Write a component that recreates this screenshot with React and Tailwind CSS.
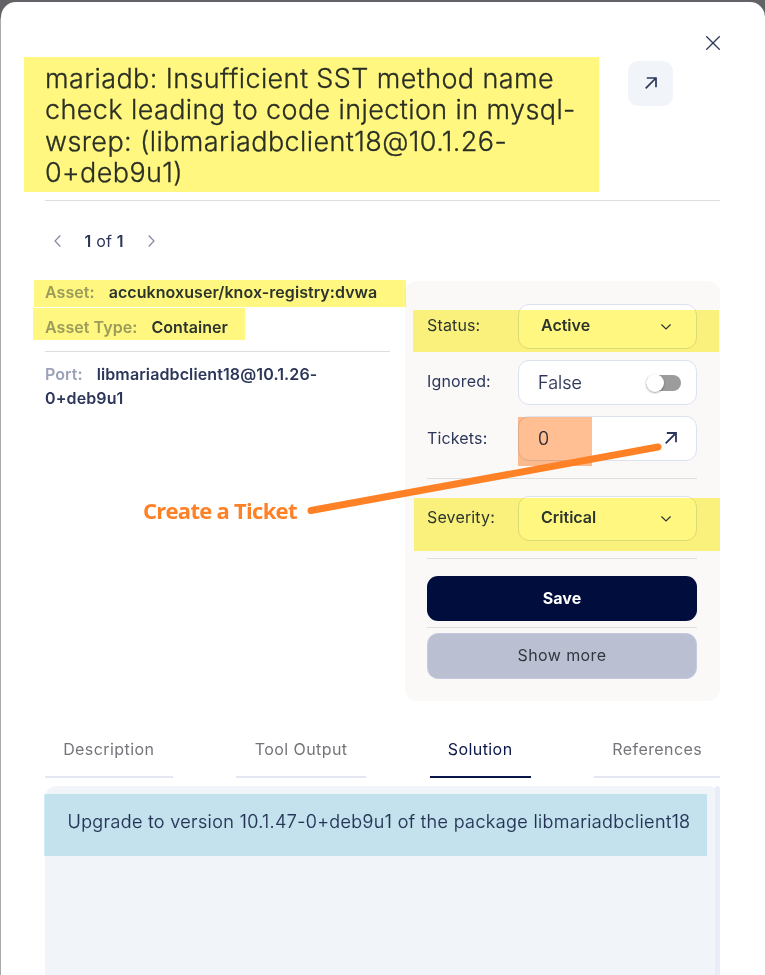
const ink = "text-[#2c3659]";

function ArrowUpRight({ className, w = 2 }) {
  return (
    <svg className={className} viewBox="0 0 12 12" fill="none" stroke="currentColor" strokeWidth={w}>
      <path d="M0.7 11.3 L11 1 M1.8 1 H11 V10.2" />
    </svg>
  );
}

function Chevron({ className, d, box }) {
  return (
    <svg className={className} viewBox={box} fill="none" stroke="currentColor" strokeWidth="1.2">
      <path d={d} />
    </svg>
  );
}

function Mark({ className }) {
  return <div className={`absolute mix-blend-multiply ${className}`} />;
}

function Divider({ className = "" }) {
  return <div className={`h-px shrink-0 bg-[#dedede] ${className}`} />;
}

function Row({ label, labelClass = "", children }) {
  return (
    <div className="flex h-[45px]">
      <div className={`w-[91px] shrink-0 whitespace-nowrap text-[16px] leading-[43px] tracking-[0.15px] ${labelClass}`}>{label}</div>
      <div className="flex h-[45px] w-[179px] items-center rounded-[11px] border border-[#dde2ef] bg-white">{children}</div>
    </div>
  );
}

function Select({ value }) {
  return (
    <>
      <span className="-mt-[4px] ml-[22px] w-[120px] text-[16px] font-semibold leading-5">{value}</span>
      <Chevron className="h-[6px] w-[10px]" box="0 0 10 6" d="M0.4 0.5 L5 5 L9.6 0.5" />
    </>
  );
}

function Tab({ label, className }) {
  return (
    <div className={`flex h-[50px] justify-center border-b-2 text-[16px] leading-[43px] tracking-[0.42px] ${className}`}>
      <span className="whitespace-nowrap">{label}</span>
    </div>
  );
}

export default function App() {
  return (
    <div className="relative h-[975px] w-[765px] overflow-hidden bg-[#a9a9ab] font-['Inter',sans-serif]">
      <div className="h-full bg-linear-to-b from-[#636266] from-[16px] to-[#a9a9ab] to-[20px] pl-px pt-[2px]">
        <div className={`flex h-[973px] flex-col rounded-t-[15px] bg-white pl-[44px] pr-[45px] ${ink}`}>
          <div className="flex h-[198px] justify-between">
            <h1 className="mt-[61px] whitespace-nowrap text-[27px] font-light leading-[31.4px] tracking-[0.39px] text-[#2a3048] [-webkit-text-stroke:0.3px_currentColor]">
              mariadb: Insufficient SST method name
              <br />
              check leading to code injection in mysql-
              <br />
              wsrep: (libmariadbclient18@10.1.26-
              <br />
              0+deb9u1)
            </h1>
            <div className="flex">
              <button className="mt-[59px] flex h-[45px] w-[45px] items-center justify-center rounded-[10px] bg-[#f1f4f9]">
                <ArrowUpRight className="-mt-[2px] h-[12px] w-[12px]" w={1.7} />
              </button>
              <button className="ml-[33px] mt-[34px] h-[14px] w-[14px]">
                <svg className="h-[14px] w-[14px]" viewBox="0 0 14 14" fill="none" stroke="currentColor" strokeWidth="1.3">
                  <path d="M0.3 0.3 L13.7 13.7 M13.7 0.3 L0.3 13.7" />
                </svg>
              </button>
            </div>
          </div>
          <Divider />
          <div className="mt-[30px] flex h-5 items-center text-[16px]">
            <Chevron className="ml-[9px] h-[12px] w-[7px] text-[#8389a0]" box="0 0 7 12" d="M6.3 0.5 L1 6 L6.3 11.5" />
            <span className="ml-[23.5px] w-[41.5px] whitespace-nowrap tracking-[0.2px]"><b className="font-semibold">1</b> of <b className="font-semibold">1</b></span>
            <Chevron className="ml-[22px] h-[12px] w-[7px] text-[#8389a0]" box="0 0 7 12" d="M0.7 0.5 L6 6 L0.7 11.5" />
          </div>
          <div className="mt-[30px] flex h-[420px] justify-between">
            <div className="-mt-px w-[344.5px] text-[16px] font-semibold tracking-[0.06px]">
              <div className="flex h-6 items-center whitespace-nowrap"><span className="mr-[14px] text-[#9ba1b8]">Asset:</span><span>accuknoxuser/knox-registry:dvwa</span></div>
              <div className="mt-[11px] flex h-6 items-center whitespace-nowrap"><span className="mr-[14px] text-[#9ba1b8]">Asset Type:</span><span>Container</span></div>
              <Divider className="mt-[12px]" />
              <div className="mt-[10px] leading-6"><span className="mr-[14px] text-[#9ba1b8]">Port:</span><span className="tracking-[0.12px]">libmariadbclient18@10.1.26-<br />0+deb9u1</span></div>
            </div>
            <div className="flex w-[315px] flex-col rounded-[12px] bg-[#faf9f8] pl-[22px] pr-[23px] pt-[23px]">
              <Row label="Status:"><Select value="Active" /></Row>
              <div className="h-[11px]" />
              <Row label="Ignored:">
                <span className="ml-[19px] w-[108px] text-[18px] font-light [-webkit-text-stroke:0.2px_currentColor]">False</span>
                <div className="flex h-4 w-[35px] items-center rounded-full bg-[#9c9c9c]">
                  <div className="h-[18px] w-[18px] shrink-0 rounded-full bg-white shadow-[0_1px_2px_rgba(0,0,0,0.35)]" />
                </div>
              </Row>
              <div className="h-[11px]" />
              <Row label="Tickets:" labelClass="pt-px">
                <span className="ml-[19px] w-[126.5px] text-[18px] font-light [-webkit-text-stroke:0.2px_currentColor]">0</span>
                <ArrowUpRight className="-mt-[1px] h-[12px] w-[12px]" w={1.8} />
              </Row>
              <Divider className="mt-[17px]" />
              <div className="h-[17px]" />
              <Row label="Severity:"><Select value="Critical" /></Row>
              <Divider className="mt-[17px]" />
              <button className="mt-[17px] h-[45px] shrink-0 rounded-[11px] bg-[#000d3d] pb-[2px] text-[16px] font-bold text-white">Save</button>
              <Divider className="mt-[6px]" />
              <button className="mt-[5px] h-[46px] shrink-0 rounded-[11px] border border-[#c5cae0] bg-[#bac0d1] pb-[2px] text-[16px] tracking-[0.4px] text-[#333640]">Show more</button>
            </div>
          </div>
          <div className="mt-[27px] flex justify-between text-[#74757a]">
            <Tab label="Description" className="w-[127.5px] border-[#e4e7f1]" />
            <Tab label="Tool Output" className="w-[129.5px] border-[#e4e7f1]" />
            <Tab label="Solution" className="w-[101px] border-[#0a1547] text-[#0a1547]" />
            <Tab label="References" className="w-[125.5px] border-[#e4e7f1]" />
          </div>
          <div className="mt-2 flex flex-1 justify-between rounded-t-[12px] bg-[#f1f4f9]">
            <p className="ml-[22.5px] mt-[22px] whitespace-nowrap text-[18px] font-light leading-7 tracking-[0.38px] [-webkit-text-stroke:0.2px_currentColor]">Upgrade to version 10.1.47-0+deb9u1 of the package libmariadbclient18</p>
            <div className="w-[5px] rounded-t bg-[#e9edf7]" />
          </div>
        </div>
      </div>
      <Mark className="left-[24px] top-[57px] h-[135px] w-[575px] bg-[#fff77f]" />
      <Mark className="left-[34px] top-[280px] h-[27px] w-[372px] bg-[#fff77f]" />
      <Mark className="left-[33px] top-[308px] h-[32px] w-[212px] bg-[#fff77f]" />
      <Mark className="left-[413px] top-[310px] h-[42px] w-[306px] bg-[#fff77f]" />
      <Mark className="left-[414px] top-[498px] h-[53px] w-[306px] bg-[#fff77f]" />
      <Mark className="left-[518px] top-[417px] h-[49px] w-[74px] bg-[#ffbf92]" />
      <Mark className="left-[44px] top-[794px] h-[62px] w-[663px] bg-[#cfedf4]" />
      <svg className="absolute left-[300px] top-[435px] h-[85px] w-[370px]" viewBox="0 0 370 85" fill="none">
        <path d="M11 75.5 L358 12" stroke="#ff8126" strokeWidth="7" strokeLinecap="round" />
      </svg>
      <div className="absolute left-[143px] top-[494px] whitespace-nowrap font-['Open_Sans',sans-serif] text-[22px] font-bold leading-[32px] tracking-[-0.72px] text-[#ff8126]">Create a Ticket</div>
    </div>
  );
}
